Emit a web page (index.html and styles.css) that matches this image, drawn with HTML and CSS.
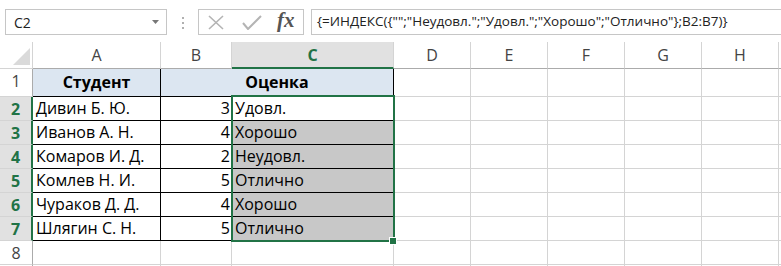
FILE: index.html
```html
<!DOCTYPE html>
<html lang="ru">
<head>
    <meta charset="UTF-8">
    <title>ИНДЕКС</title>
    <link rel="stylesheet" href="styles.css">
</head>
<body>
    <div class="formula-bar">
        <div class="name-box">
            <span>C2</span>
            <svg class="caret" width="7" height="4" viewBox="0 0 7 4"><path d="M0 0h7L3.5 4z" fill="#777"/></svg>
        </div>
        <div class="grip"><i></i><i></i><i></i></div>
        <div class="fx-buttons">
            <svg width="16" height="15" viewBox="0 0 16 15"><path d="M1 1l14 13M15 1L1 14" stroke="#b4b4b4" stroke-width="1.6" fill="none"/></svg>
            <svg width="20" height="15" viewBox="0 0 20 15"><path d="M1 8l5 6L19 1" stroke="#b4b4b4" stroke-width="2" fill="none"/></svg>
            <span class="fx">fx</span>
        </div>
        <div class="formula-input">{=ИНДЕКС({"";"Неудовл.";"Удовл.";"Хорошо";"Отлично"};B2:B7)}</div>
    </div>

    <div class="sheet">
        <div class="corner"><svg width="17" height="17" viewBox="0 0 17 17"><path d="M17 0v17H0z" fill="#dadada"/></svg></div>
        <div class="col-head">A</div>
        <div class="col-head">B</div>
        <div class="col-head active">C</div>
        <div class="col-head">D</div>
        <div class="col-head">E</div>
        <div class="col-head">F</div>
        <div class="col-head">G</div>
        <div class="col-head">H</div>
        <div class="col-head"></div>

        <div class="row-head">1</div>
        <div class="cell title bd">Студент</div>
        <div class="cell title bd span2">Оценка</div>
        <div class="cell"></div><div class="cell"></div><div class="cell"></div><div class="cell"></div><div class="cell"></div><div class="cell"></div>

        <div class="row-head sel">2</div>
        <div class="cell bd">Дивин Б. Ю.</div>
        <div class="cell bd num">3</div>
        <div class="cell bd">Удовл.</div>
        <div class="cell"></div><div class="cell"></div><div class="cell"></div><div class="cell"></div><div class="cell"></div><div class="cell"></div>

        <div class="row-head sel">3</div>
        <div class="cell bd">Иванов А. Н.</div>
        <div class="cell bd num">4</div>
        <div class="cell bd shade">Хорошо</div>
        <div class="cell"></div><div class="cell"></div><div class="cell"></div><div class="cell"></div><div class="cell"></div><div class="cell"></div>

        <div class="row-head sel">4</div>
        <div class="cell bd">Комаров И. Д.</div>
        <div class="cell bd num">2</div>
        <div class="cell bd shade">Неудовл.</div>
        <div class="cell"></div><div class="cell"></div><div class="cell"></div><div class="cell"></div><div class="cell"></div><div class="cell"></div>

        <div class="row-head sel">5</div>
        <div class="cell bd">Комлев Н. И.</div>
        <div class="cell bd num">5</div>
        <div class="cell bd shade">Отлично</div>
        <div class="cell"></div><div class="cell"></div><div class="cell"></div><div class="cell"></div><div class="cell"></div><div class="cell"></div>

        <div class="row-head sel">6</div>
        <div class="cell bd">Чураков Д. Д.</div>
        <div class="cell bd num">4</div>
        <div class="cell bd shade">Хорошо</div>
        <div class="cell"></div><div class="cell"></div><div class="cell"></div><div class="cell"></div><div class="cell"></div><div class="cell"></div>

        <div class="row-head sel">7</div>
        <div class="cell bd">Шлягин С. Н.</div>
        <div class="cell bd num">5</div>
        <div class="cell bd shade">Отлично</div>
        <div class="cell"></div><div class="cell"></div><div class="cell"></div><div class="cell"></div><div class="cell"></div><div class="cell"></div>

        <div class="row-head">8</div>
        <div class="cell"></div><div class="cell"></div><div class="cell"></div><div class="cell"></div><div class="cell"></div><div class="cell"></div><div class="cell"></div><div class="cell"></div><div class="cell"></div>

        <div class="row-head last"></div>
        <div class="cell last"></div><div class="cell last"></div><div class="cell last"></div><div class="cell last"></div><div class="cell last"></div><div class="cell last"></div><div class="cell last"></div><div class="cell last"></div><div class="cell last"></div>

        <div class="selection"></div>
        <div class="fill-handle"></div>
    </div>
</body>
</html>
```

FILE: styles.css
```css
body {
    margin: 0;
    padding: 0;
    background: #fff;
    font-family: "Open Sans", "Liberation Sans", sans-serif;
    overflow: hidden;
}

.formula-bar {
    display: flex;
    align-items: flex-start;
    height: 42px;
    padding-top: 9px;
    box-sizing: border-box;
}

.name-box {
    display: flex;
    align-items: center;
    justify-content: space-between;
    width: 162px;
    height: 26px;
    margin-left: 5px;
    padding: 0 7px 0 8px;
    box-sizing: border-box;
    border: 1px solid #c6c6c6;
    font-size: 14px;
    color: #222;
}

.grip {
    display: flex;
    flex-direction: column;
    gap: 3px;
    width: 31px;
    align-items: center;
    padding-top: 8px;
}

.grip i {
    width: 2px;
    height: 2px;
    background: #b0b0b0;
}

.fx-buttons {
    display: flex;
    align-items: center;
    width: 106px;
    height: 26px;
    box-sizing: border-box;
    border: 1px solid #c6c6c6;
    padding-left: 9px;
}

.fx-buttons svg:nth-child(2) {
    margin-left: 18px;
}

.fx {
    margin-left: 15px;
    margin-top: -3px;
    font-family: "Liberation Serif", serif;
    font-style: italic;
    font-weight: bold;
    font-size: 21px;
    color: #555;
    line-height: 1;
}

.formula-input {
    flex: 1;
    height: 26px;
    margin-left: 7px;
    margin-right: -2px;
    border: 1px solid #c6c6c6;
    box-sizing: border-box;
    padding-left: 5px;
    font-size: 13.5px;
    line-height: 23px;
    color: #222;
    white-space: nowrap;
}

.sheet {
    position: relative;
    display: grid;
    grid-template-columns: 33px 128px 71px 162px 77px 77px 77px 77px 77px 1fr;
    grid-template-rows: 27px 28px repeat(7, 24px) 1px;
}

.sheet > div {
    box-sizing: border-box;
    border-right: 1px solid #d4d4d4;
    border-bottom: 1px solid #d4d4d4;
}

.sheet > .last {
    border-bottom: none;
}

.corner {
    display: flex;
    align-items: flex-end;
    justify-content: flex-end;
    padding: 0 2px 3px 0;
}

.col-head {
    text-align: center;
    font-size: 16px;
    line-height: 27px;
    color: #444;
    border-bottom-color: #ababab !important;
}

.col-head.active {
    background: #e1e1e1;
    color: #217346;
    font-weight: bold;
    border-bottom: 2px solid #217346 !important;
}

.row-head {
    text-align: center;
    font-size: 16px;
    line-height: 24px;
    color: #444;
    border-right-color: #ababab !important;
}

.row-head.sel {
    background: #e1e1e1;
    color: #217346;
    font-weight: bold;
    border-right: 2px solid #217346 !important;
}

.cell {
    font-size: 16px;
    line-height: 23px;
    padding: 0 3px;
    color: #000;
    white-space: nowrap;
}

.cell.bd {
    border-right-color: #000;
    border-bottom-color: #000;
}

.cell.title {
    background: #dce6f1;
    font-weight: bold;
    text-align: center;
    line-height: 27px;
}

.span2 {
    grid-column: span 2;
}

.cell.num {
    text-align: right;
    padding-right: 1px;
}

.cell.shade {
    background: #c8c8c8;
}

.selection {
    position: absolute;
    left: 231px;
    top: 53px;
    width: 164px;
    height: 147px;
    border: 2px solid #217346 !important;
    pointer-events: none;
}

.fill-handle {
    position: absolute;
    left: 389px;
    top: 195px;
    width: 8px;
    height: 8px;
    background: #217346;
    border: 1px solid #fff !important;
}
```
